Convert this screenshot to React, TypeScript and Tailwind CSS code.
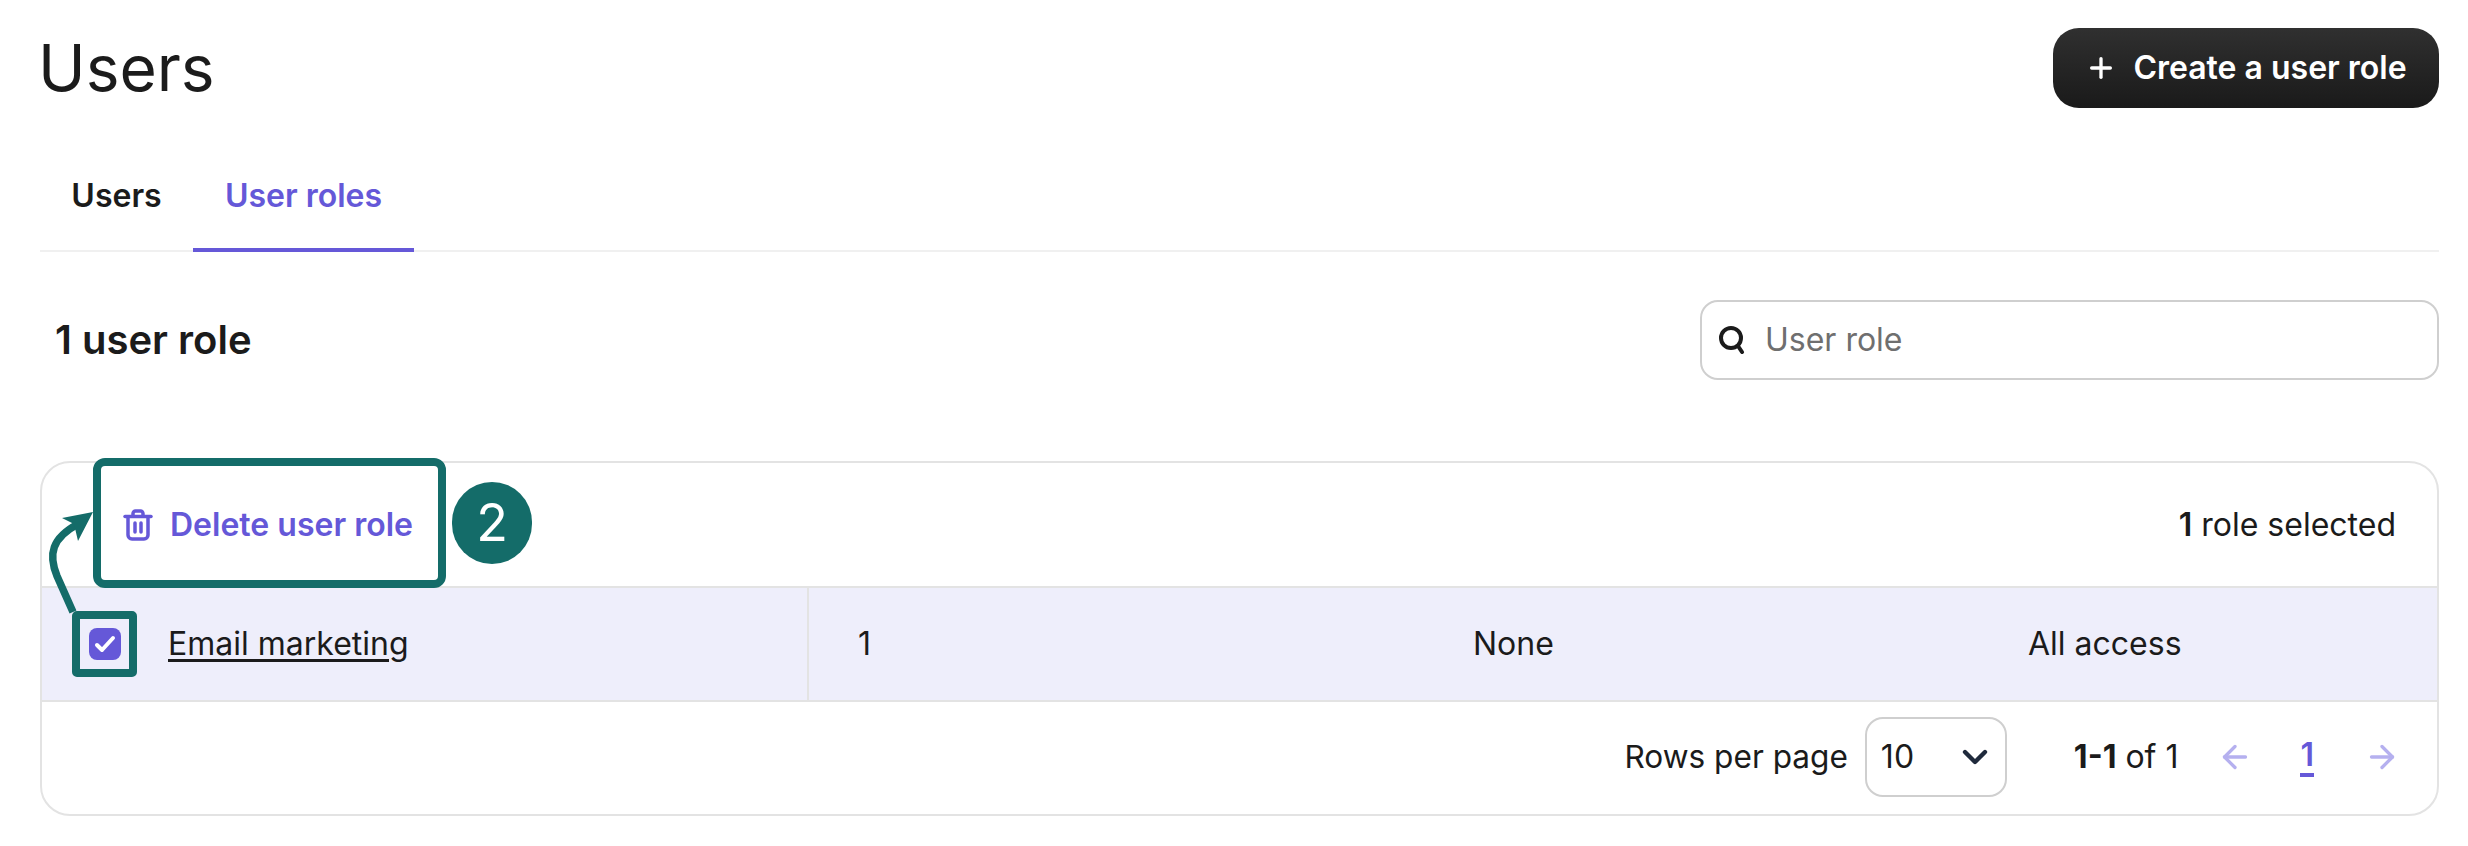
import { ArrowLeft, ArrowRight, ChevronDown, Plus } from 'lucide-react';

const font = { fontFamily: 'Inter, "Liberation Sans", sans-serif' };

function TrashIcon() {
  return (
    <svg width="30" height="32" viewBox="0 0 30 32" fill="none" stroke="#6558d8" strokeWidth="3.5" strokeLinecap="round" strokeLinejoin="round">
      <path d="M2 7.5h26" />
      <path d="M10 7V4.5A2.5 2.5 0 0 1 12.5 2h5A2.5 2.5 0 0 1 20 4.5V7" />
      <path d="M5 8v18a4 4 0 0 0 4 4h12a4 4 0 0 0 4-4V8" />
      <path d="M12 14v9M18 14v9" />
    </svg>
  );
}

function SearchIcon() {
  return (
    <svg width="30" height="28" viewBox="0 0 30 28" fill="none" stroke="#1b1b1b" strokeWidth="4" strokeLinecap="round">
      <circle cx="14" cy="12" r="10" />
      <path d="M21 20l4 6" />
    </svg>
  );
}

export default function App() {
  return (
    <div className="relative h-[846px] w-[2468px] overflow-hidden bg-white pl-10 pr-[29px] pt-7 text-[#1b1b1b]" style={font}>
      {/* Title */}
      <div className="flex h-20 items-center justify-between">
        <h1 className="-ml-[2px] text-[64px] font-normal leading-none">Users</h1>
        <button className="flex h-20 w-[386px] items-center justify-center gap-[16px] rounded-[26px] bg-gradient-to-b from-[#303030] to-[#1a1a1a] text-[32px] font-semibold text-white">
          <Plus className="h-8 w-8" strokeWidth={2.5} />
          Create a user role
        </button>
      </div>

      {/* Tabs */}
      <div className="mt-[64px] flex h-20 border-b-2 border-[#f0f0f0] text-[32px] font-semibold">
        <div className="flex h-20 w-[153px] items-start justify-center">Users</div>
        <div className="flex h-20 w-[221px] items-start justify-center border-b-4 border-[#6558d8] text-[#6558d8]">User roles</div>
      </div>

      {/* Count and search */}
      <div className="mt-12 flex h-20 items-center justify-between">
        <h2 className="pl-[15px] text-[40px] font-semibold">1 user role</h2>
        <div className="flex h-20 w-[739px] items-center gap-[18px] rounded-[18px] border-2 border-[#cfcfcf] pl-[15px]">
          <SearchIcon />
          <span className="text-[32px] text-[#6f6f6f]">User role</span>
        </div>
      </div>

      {/* Table */}
      <div className="mt-[81px] h-[355px] w-[2399px] overflow-hidden rounded-[30px] border-2 border-[#e3e3e3] text-[32px]">
        <div className="flex h-[123px] items-center justify-between pl-[81px] pr-[41px]">
          <div className="flex items-center gap-[17px] font-semibold text-[#6558d8]">
            <TrashIcon />
            Delete user role
          </div>
          <div>
            <span className="font-semibold">1</span> role selected
          </div>
        </div>
        <div className="flex h-[116px] items-stretch border-y-2 border-[#e3e3e3] bg-[#eeeefb]">
          <div className="flex w-[767px] items-center gap-[47px] border-r-2 border-[#e3e3e3] pl-[47px]">
            <div className="flex h-8 w-8 items-center justify-center rounded-lg bg-[#6558d8]">
              <svg width="22" height="18" viewBox="0 0 22 18" fill="none" stroke="#fff" strokeWidth="4" strokeLinecap="round" strokeLinejoin="round">
                <path d="M3 10l5 5L19 3" />
              </svg>
            </div>
            <span className="underline decoration-[3px] underline-offset-[4px]">Email marketing</span>
          </div>
          <div className="flex w-[615px] items-center pl-[49px]">1</div>
          <div className="flex w-[557px] items-center pl-[49px]">None</div>
          <div className="flex items-center pl-[47px]">All access</div>
        </div>
        <div className="flex h-[111px] items-center justify-end pb-[2px] pr-[37px]">
          <span className="text-[31.6px]">Rows per page</span>
          <div className="ml-[17px] flex h-20 w-[142px] items-center justify-between rounded-[18px] border-2 border-[#cfcfcf] pl-[14px] pr-[10px]">
            <span>10</span>
            <ChevronDown className="h-10 w-10 text-[#1f2a3c]" strokeWidth={2.6} />
          </div>
          <div className="ml-[67px]">
            <span className="font-bold">1-1</span> of 1
          </div>
          <ArrowLeft className="ml-[39px] h-9 w-9 text-[#b5b0ef]" strokeWidth={2.2} />
          <span className="ml-[47px] border-b-4 border-[#6558d8] font-semibold leading-[36px] text-[#6558d8]">1</span>
          <ArrowRight className="ml-[50px] h-9 w-9 text-[#b5b0ef]" strokeWidth={2.2} />
        </div>
      </div>

      {/* Annotation overlay */}
      <div className="absolute left-[93px] top-[458px] h-[130px] w-[353px] rounded-[12px] border-[8px] border-[#146c69]" />
      <div className="absolute left-[452px] top-[482px] flex h-[82px] w-[80px] items-center justify-center rounded-full bg-[#146c69] text-[52px] leading-none text-white">2</div>
      <div className="absolute left-[72px] top-[611px] h-[66px] w-[65px] rounded-[5px] border-[8px] border-[#146c69]" />
      <svg className="absolute left-[40px] top-[500px]" width="60" height="120" viewBox="0 0 60 120" fill="none">
        <path d="M33 112 L17 76 C8 54 12 38 38 24" stroke="#146c69" strokeWidth="7.5" />
        <path d="M53 12 L22 18 L34 24 L38 41 Z" fill="#146c69" />
      </svg>
    </div>
  );
}
